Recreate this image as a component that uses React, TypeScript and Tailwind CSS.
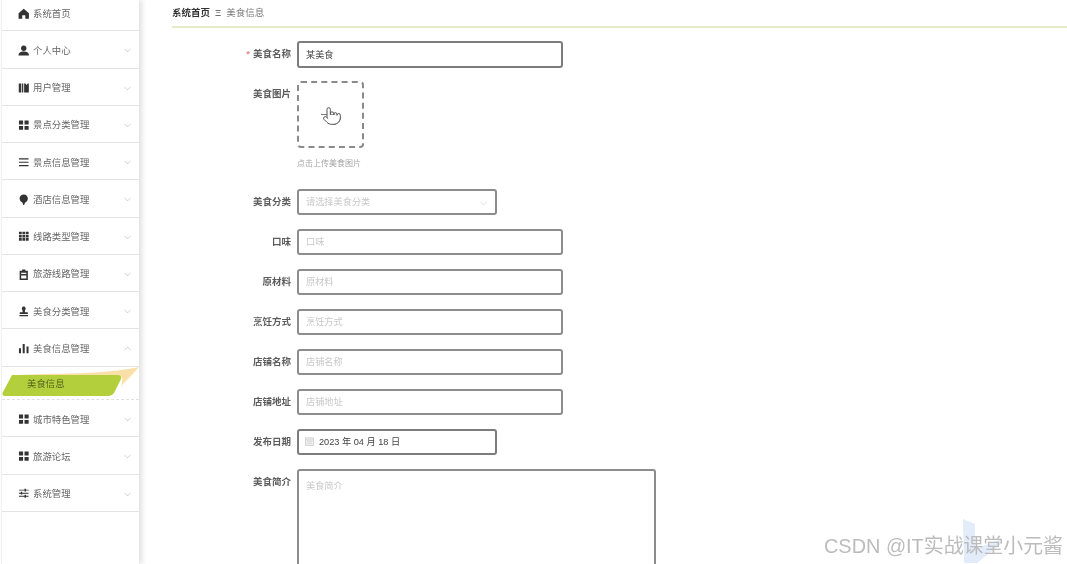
import React from "react";
import { ChevronDown, ChevronUp, Pointer } from "lucide-react";

const Font = '"Liberation Sans","Noto Sans CJK SC",sans-serif';

const icons: Record<string, React.ReactNode> = {
  home: <path d="M6 .8 .6 5.600v5.600h3.800V7.600h3.200v3.600h3.800V5.600z" />,
  user: <><circle cx="6" cy="3.400" r="2.800" /><path d="M.5 11c0-3 2.200-4.200 5.500-4.200s5.500 1.200 5.500 4.200z" /></>,
  book: <path d="M.8 1.500h2.600V11H.8zM4.200 1.500h1.300V11H4.200zM6.400 1.500h1.400l1.200 1.500 1.200-1.500h1.100V11H6.400z" />,
  grid2: <path d="M1 .6h4.300v4.100H1zM6.800 .6h4.300v4.100H6.800zM1 6.200h4.300v4.100H1zM6.800 6.200h4.300v4.100H6.800z" />,
  lines: <path d="M1 1.400h10v1.200H1zM1 4.900h10v1.200H1zM1 8.400h10v1.200H1z" />,
  pin: <path d="M6 .5c2.700 0 4.300 1.900 4.300 4.200 0 2.200-1.700 3.700-3 4.400L6.400 11.600H5.600L4.700 9.100c-1.300-.7-3-2.200-3-4.400C1.700 2.400 3.300.5 6 .5z" />,
  grid3: <path d="M1 .8h2.900v2.700H1zM4.600 .8h2.900v2.700H4.600zM8.200 .8h2.900v2.700H8.200zM1 4.100h2.900v2.700H1zM4.600 4.100h2.900v2.700H4.600zM8.200 4.100h2.900v2.700H8.200zM1 7.400h2.900v2.700H1zM4.600 7.400h2.900v2.700H4.600zM8.200 7.400h2.900v2.700H8.200z" />,
  clip: <path fillRule="evenodd" d="M4.300.6h3.400v1.300h2.600v9.600H1.700V1.900h2.600zM3.300 4v1.300h5.400V4zM3.300 6.700V9.800h5.400V6.700z" />,
  stamp: <path d="M6 .6a2.100 2.100 0 0 1 1.300 3.700L7.200 6.400h3v2H1.800v-2h3L4.700 4.300A2.100 2.100 0 0 1 6 .6zM1.500 9.400h9v1.200h-9z" />,
  bars: <path d="M1 5.600h2.100v5H1zM4.900 1.100H7v9.500H4.900zM8.900 3.600h2.100v7H8.900z" />,
  sliders: <path d="M1 1.700h5.800v-1h1.500v1h2.700v1H8.300v1H6.800v-1H1zM1 4.900h1.900v-1h1.500v1H11v1H4.400v1H2.900v-1H1zM1 8.100h5.800v-1h1.500v1h2.700v1H8.300v1H6.800v-1H1z" />,
};

const before = [
  ["home", "系统首页", ""],
  ["user", "个人中心", "d"],
  ["book", "用户管理", "d"],
  ["grid2", "景点分类管理", "d"],
  ["lines", "景点信息管理", "d"],
  ["pin", "酒店信息管理", "d"],
  ["grid3", "线路类型管理", "d"],
  ["clip", "旅游线路管理", "d"],
  ["stamp", "美食分类管理", "d"],
  ["bars", "美食信息管理", "u"],
];
const after = [
  ["grid2", "城市特色管理", "d"],
  ["grid2", "旅游论坛", "d"],
  ["sliders", "系统管理", "d"],
];

function MenuRow({ icon, label, arrow }: { icon: string; label: string; arrow: string }) {
  return (
    <div className="flex h-[37.25px] items-center border-b border-[#e4e4e4] pl-[15.500px] pr-[6px] pt-[3px]">
      <svg viewBox="0 0 12 12" className="h-[11.500px] w-[11.500px] shrink-0 fill-[#333]">{icons[icon]}</svg>
      <span className="ml-[4px] flex-1 text-[9.400px] text-[#666]">{label}</span>
      {arrow === "d" && <ChevronDown size={11} strokeWidth={1} className="text-[#999]" />}
      {arrow === "u" && <ChevronUp size={11} strokeWidth={1} className="text-[#999]" />}
    </div>
  );
}

function Label({ children, star }: { children: React.ReactNode; star?: boolean }) {
  return (
    <label className="w-[119px] shrink-0 pr-[6px] text-right text-[9.500px] font-semibold leading-[26px] text-[#5c5c5c]">
      {star && <span className="mr-[3px] text-[#e58a8a]">*</span>}
      {children}
    </label>
  );
}

function Field({ label, ph, w = "w-[266px]" }: { label: string; ph: string; w?: string }) {
  return (
    <div className="mt-[13.500px] flex">
      <Label>{label}</Label>
      <div className={`flex h-[26.500px] items-center rounded-[3px] border-2 border-[#8c8c8c] pl-[7px] pt-[3px] text-[9.200px] text-[#c8c8c8] ${w}`}>
        {ph}
      </div>
    </div>
  );
}

export default function App() {
  return (
    <div className="relative flex h-[564px] w-[1067px] overflow-hidden bg-white blur-[0.4px]" style={{ fontFamily: Font }}>
      <aside className="ml-[1px] h-full w-[138px] shrink-0 border-l border-[#f0f0f0] shadow-[3px_0_5px_rgba(0,0,0,0.12)]">
        <div className="-mt-[6px]">
          {before.map(([i, l, a]) => (
            <MenuRow key={l} icon={i} label={l} arrow={a} />
          ))}
          <div className="relative h-[33.500px] border-b border-dashed border-[#e0e0e0]">
            <svg viewBox="0 0 138 33" className="absolute left-0 top-0 h-[33px] w-[138px]">
              <path d="M14 8 C50 6 100 8 137 0 C130 8 124 14 119 19 C122 12 120 9 116 8z" fill="#f9e0a8" />
              <path d="M10 8 H116 Q120 8 119 12 L112 26 Q110 29 107 29 H3 Q-1 29 1 25z" fill="#b3cf3c" />
            </svg>
            <span className="absolute left-[25px] top-[10.500px] text-[9.400px] text-[#55611f]">美食信息</span>
          </div>
          {after.map(([i, l, a]) => (
            <MenuRow key={l} icon={i} label={l} arrow={a} />
          ))}
        </div>
      </aside>

      <main className="min-w-0 flex-1 pl-[33px]">
        <div className="flex h-[28px] items-center border-b-2 border-[#e4ecc8] pt-[1px] text-[9.500px]">
          <span className="font-bold text-[#333]">系统首页</span>
          <span className="mx-[5px] text-[#444]">Ξ</span>
          <span className="text-[#777]">美食信息</span>
        </div>

        <div className="pl-[6px]">
          <div className="mt-[13px] flex">
            <Label star>美食名称</Label>
            <div className="flex h-[26.500px] w-[266px] items-center rounded-[3px] border-2 border-[#7c7c7c] pl-[7px] pt-[3px] text-[9.200px] text-[#444]">
              某美食
            </div>
          </div>

          <div className="mt-[13.500px] flex">
            <Label>美食图片</Label>
            <div>
              <div className="relative flex h-[67px] w-[67px] items-center justify-center rounded-[4px] border-2 border-dashed border-[#8a8a8a]">
                <span className="h-[1.500px] w-[19px] bg-[#777]" />
                <Pointer size={20} strokeWidth={1.1} className="absolute left-[23px] top-[23px] fill-white text-[#444]" />
              </div>
              <p className="mt-[11px] text-[8px] leading-[10px] text-[#a5a5a5]">点击上传美食图片</p>
            </div>
          </div>

          <div className="mt-[19.500px] flex">
            <Label>美食分类</Label>
            <div className="flex h-[26.500px] w-[200px] items-center justify-between rounded-[3px] border-2 border-[#8c8c8c] pl-[7px] pr-[6px] pt-[3px] text-[9.200px] text-[#c8c8c8]">
              请选择美食分类
              <ChevronDown size={11} strokeWidth={1} className="text-[#b5b5b5]" />
            </div>
          </div>

          <Field label="口味" ph="口味" />
          <Field label="原材料" ph="原材料" />
          <Field label="烹饪方式" ph="烹饪方式" />
          <Field label="店铺名称" ph="店铺名称" />
          <Field label="店铺地址" ph="店铺地址" />

          <div className="mt-[13.500px] flex">
            <Label>发布日期</Label>
            <div className="flex h-[26.500px] w-[200px] items-center rounded-[3px] border-2 border-[#7c7c7c] pl-[6px] pt-[2px] text-[9.200px] text-[#444]">
              <svg viewBox="0 0 10 10" className="mb-[3px] mr-[5px] h-[9px] w-[9px]">
                <rect x="0.500" y="1" width="9" height="8.500" fill="#ececec" stroke="#c4c4c4" strokeWidth="0.700" />
                <path d="M.5 3.200h9M2.500 5h5M2.500 7h5" stroke="#ccc" strokeWidth="0.600" />
              </svg>
              2023 年 04 月 18 日
            </div>
          </div>

          <div className="mt-[13.500px] flex">
            <Label>美食简介</Label>
            <div className="h-[140px] w-[359px] rounded-[3px] border-2 border-[#8c8c8c] px-[7px] pt-[9px] text-[9.200px] text-[#c8c8c8]">
              美食简介
            </div>
          </div>
        </div>
      </main>

      <svg viewBox="0 0 40 46" className="absolute left-[963px] top-[519px] h-[46px] w-[40px]">
        <path d="M0 0 L12 5 V30 L36 21 L39 24 L14 44 H1z" fill="#e2ecfa" />
      </svg>
      <div className="absolute left-[824px] top-[534px] text-[19.900px] leading-[24px] text-[#bcbcbc]">CSDN @IT实战课堂小元酱</div>
    </div>
  );
}
